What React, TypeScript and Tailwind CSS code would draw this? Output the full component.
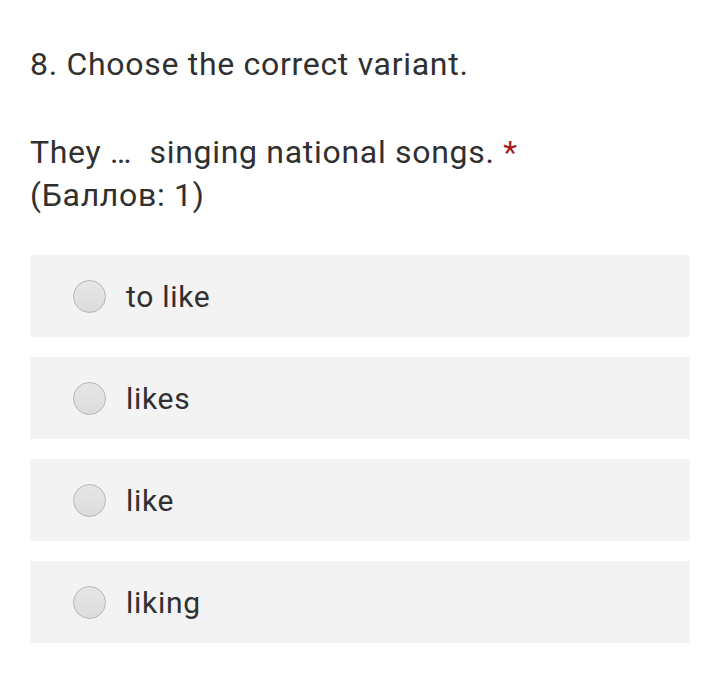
const options = ['to like', 'likes', 'like', 'liking'];

export default function App() {
  return (
    <div className="min-h-[676px] w-[720px] bg-white px-[30px] pt-[44px] text-[#303030]" style={{ fontFamily: 'Roboto, "Noto Sans", sans-serif' }}>
      <h2 className="text-[32px] leading-[40px] tracking-[0.7px]">8. Choose the correct variant.</h2>
      <div className="mt-[47px] text-[32px] leading-[43px] tracking-[0.7px]">
        <div>
          They …&nbsp; singing national songs. <span className="text-[#a51d1d]">*</span>
        </div>
        <div>(Баллов: 1)</div>
      </div>
      <div className="mt-[38px] flex flex-col gap-[20px]">
        {options.map((o) => (
          <div key={o} className="flex h-[82px] items-center bg-[#f3f3f3] pl-[43px]">
            <span className="h-[33px] w-[33px] rounded-full border border-[#b5b5b5] bg-gradient-to-b from-[#e6e6e6] to-[#dcdcdc]" />
            <span className="ml-[20px] text-[30px] tracking-[0.7px]">{o}</span>
          </div>
        ))}
      </div>
    </div>
  );
}
